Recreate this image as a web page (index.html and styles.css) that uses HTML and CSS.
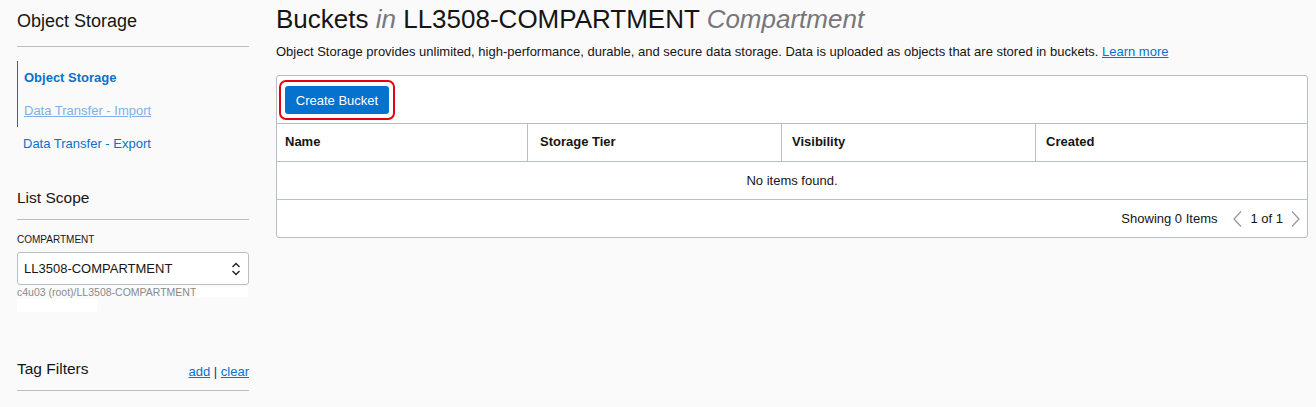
FILE: index.html
```html
<!DOCTYPE html>
<html>
<head>
<meta charset="utf-8">
<link rel="stylesheet" href="styles.css">
</head>
<body>
<div class="page">
  <aside class="sidebar">
    <h2 class="side-title">Object Storage</h2>
    <ul class="nav">
      <li class="nav-item active">Object Storage</li>
      <li class="nav-item visited">Data Transfer - Import</li>
      <li class="nav-item plain">Data Transfer - Export</li>
    </ul>
    <h2 class="side-title scope">List Scope</h2>
    <div class="field-label">COMPARTMENT</div>
    <div class="select">
      <span>LL3508-COMPARTMENT</span>
      <svg class="chev" width="10" height="14" viewBox="0 0 10 14"><path d="M1.5 5 L5 1.5 L8.5 5 M1.5 9 L5 12.5 L8.5 9" fill="none" stroke="#222" stroke-width="1.4"/></svg>
    </div>
    <div class="path"><span>c4u03 (root)/LL3508-COMPARTMENT</span><span class="redact r1"></span></div>
    <div class="redact r2"></div>
    <div class="tag-head">
      <h2 class="side-title tags">Tag Filters</h2>
      <div class="tag-links"><a>add</a> | <a>clear</a></div>
    </div>
  </aside>
  <main class="main">
    <h1 class="title">Buckets <em>in</em> LL3508-COMPARTMENT <em>Compartment</em></h1>
    <p class="desc">Object Storage provides unlimited, high-performance, durable, and secure data storage. Data is uploaded as objects that are stored in buckets. <a>Learn more</a></p>
    <div class="panel">
      <div class="toolbar">
        <div class="highlight"><button class="btn">Create Bucket</button></div>
      </div>
      <div class="thead">
        <div class="th">Name</div>
        <div class="th">Storage Tier</div>
        <div class="th">Visibility</div>
        <div class="th">Created</div>
      </div>
      <div class="empty">No items found.</div>
      <div class="footer">
        <span class="count">Showing 0 Items</span>
        <span class="pager">
          <svg width="11" height="18" viewBox="0 0 11 18"><path d="M9 1.5 L2 9 L9 16.5" fill="none" stroke="#9a9a9a" stroke-width="1.3"/></svg>
          <span>1 of 1</span>
          <svg width="11" height="18" viewBox="0 0 11 18"><path d="M2 1.5 L9 9 L2 16.5" fill="none" stroke="#9a9a9a" stroke-width="1.3"/></svg>
        </span>
      </div>
    </div>
  </main>
</div>
</body>
</html>
```

FILE: styles.css
```css
* { box-sizing: border-box; }
html, body { margin: 0; padding: 0; }
body {
  background: #fafafb;
  font-family: "Liberation Sans", Arial, sans-serif;
  color: #161513;
  width: 1316px;
  height: 407px;
  overflow: hidden;
}
.page {
  display: flex;
  padding-left: 17px;
}
.sidebar {
  width: 232px;
  flex: none;
}
.side-title {
  font-weight: normal;
  font-size: 18px;
  margin: 0;
  padding: 11px 0 14px;
  border-bottom: 1px solid #b9bdc4;
  line-height: 21px;
}
.nav {
  list-style: none;
  margin: 14px 0 0;
  padding: 0;
}
.nav-item {
  font-size: 13px;
  line-height: 33px;
  padding-left: 6px;
  color: #0572ce;
}
.nav-item.active,
.nav-item.visited { border-left: 1px solid #0572ce; }
.nav-item.active { font-weight: bold; }
.nav-item.visited { color: #7fb1e5; text-decoration: underline; }
.side-title.scope {
  margin-top: 16px;
  font-size: 15.5px;
  padding-bottom: 11px;
}
.field-label {
  font-size: 10px;
  margin-top: 14px;
  line-height: 12px;
  color: #161513;
}
.select {
  margin-top: 6px;
  height: 33px;
  border: 1px solid #b9bdc4;
  border-radius: 3px;
  background: #fff;
  display: flex;
  align-items: center;
  justify-content: space-between;
  padding: 0 6px 0 6px;
  font-size: 13px;
}
.chev { margin-right: 1px; }
.path {
  font-size: 10.5px;
  color: #8a8a8a;
  margin-top: 0;
  line-height: 14px;
  display: flex;
  align-items: center;
}
.redact { background: #fff; display: block; }
.r1 { width: 52px; height: 10px; margin-left: 0; }
.r2 { width: 80px; height: 13px; margin-top: 0; }
.tag-head {
  display: flex;
  align-items: flex-end;
  justify-content: space-between;
  border-bottom: 1px solid #b9bdc4;
  margin-top: 47px;
  padding-bottom: 11px;
}
.side-title.tags { border: none; padding: 0; line-height: 20px; font-size: 15.5px; }
.tag-links { font-size: 13px; line-height: 15px; color: #333; }
.tag-links a { color: #0572ce; text-decoration: underline; }
.main {
  margin-left: 27px;
  width: 1032px;
  flex: none;
}
.title {
  font-weight: normal;
  font-size: 26px;
  margin: 4px 0 0;
  line-height: 30px;
}
.title em { color: #77767a; }
.desc {
  font-size: 13px;
  margin: 10px 0 0;
  line-height: 16px;
}
.desc a { color: #0572ce; text-decoration: underline; }
.panel {
  margin-top: 15px;
  background: #fff;
  border: 1px solid #b9bdc4;
  border-radius: 3px;
}
.toolbar {
  height: 48px;
  padding: 4px 0 0 2px;
  border-bottom: 1px solid #b9bdc4;
}
.highlight {
  display: inline-block;
  border: 2px solid #e3000f;
  border-radius: 7px;
  padding: 4px;
}
.btn {
  display: block;
  background: #0572ce;
  color: #fff;
  border: none;
  border-radius: 3px;
  font-family: inherit;
  font-size: 13px;
  height: 28px;
  width: 104px;
  padding: 0;
}
.thead {
  display: grid;
  grid-template-columns: 250px 254px 254px 1fr;
  border-bottom: 1px solid #b9bdc4;
}
.th {
  font-size: 13px;
  font-weight: bold;
  height: 37px;
  line-height: 36px;
  padding-left: 8px;
  border-left: 1px solid #b9bdc4;
}
.th:first-child { border-left: none; }
.th:nth-child(2) { padding-left: 12px; }
.th:nth-child(3) { padding-left: 10px; }
.th:nth-child(4) { padding-left: 10px; }
.empty {
  height: 38px;
  line-height: 37px;
  text-align: center;
  font-size: 13px;
  border-bottom: 1px solid #b9bdc4;
}
.footer {
  height: 37px;
  display: flex;
  align-items: center;
  justify-content: flex-end;
  padding-right: 6px;
  font-size: 13px;
}
.pager {
  display: flex;
  align-items: center;
  gap: 7px;
  margin-left: 15px;
}
```
